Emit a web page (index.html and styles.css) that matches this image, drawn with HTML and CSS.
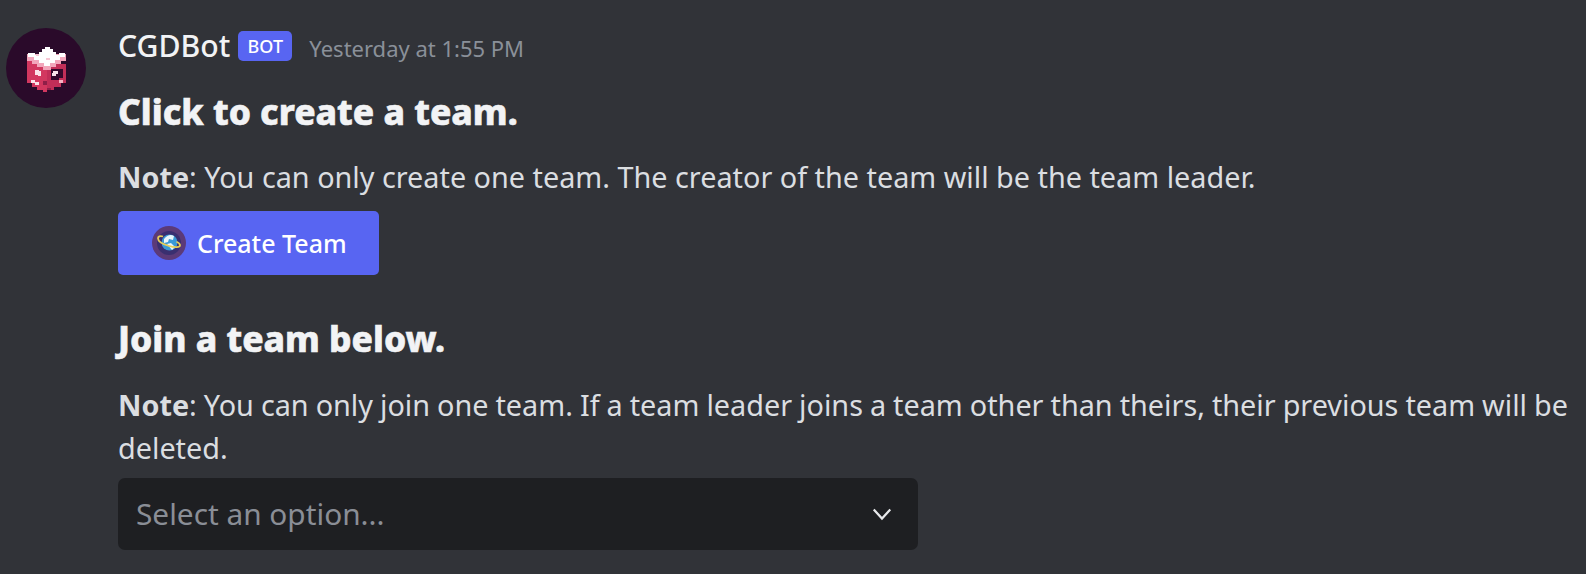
FILE: index.html
```html
<!DOCTYPE html>
<html lang="en">
<head>
<meta charset="utf-8">
<title>CGDBot</title>
<link rel="stylesheet" href="styles.css">
</head>
<body>
<div class="message">
  <svg class="avatar" viewBox="0 0 80 80" shape-rendering="crispEdges" aria-hidden="true">
    <circle cx="40" cy="40" r="40" fill="#2a0a2a" shape-rendering="auto"/>
    <path fill="#d2375f" d="M21 30H41V64H37V62H31V59H26V55H21Z"/>
    <path fill="#c22e58" d="M41 36H60V55H55V59H48V62H41Z"/>
    <path fill="#35092c" d="M45 41H57V50H53V52H45Z"/>
    <path fill="#f2a6bb" d="M21 26H60V33H55V36H50V39H45V42H37V39H31V36H26V33H21Z"/>
    <path fill="#fff" d="M22 25H29V27H33V24H36V21H39V19H44V21H47V24H50V27H53V25H59V29H54V32H49V35H44V38H38V35H33V32H28V29H22Z"/>
    <path fill="#f7c6d3" d="M40 30H44V32H40ZM30 26H33V28H30Z"/>
    <path fill="#fbe3e9" d="M29 42H33V43H35V48H32V47H29ZM47 43H52V46H50V48H46V45H47ZM25 52H29V54H33V57H29V55H25Z"/>
    <path fill="#f4b3c4" d="M53 52H57V55H53Z"/>
    <path fill="#8e1f48" d="M37 53H41V57H37ZM41 60H45V62H41Z"/>
  </svg>
  <div class="content">
    <div class="header">
      <span class="name">CGDBot</span>
      <span class="badge">BOT</span>
      <span class="time">Yesterday at 1:55 PM</span>
    </div>
    <h2 class="title first">Click to create a team.</h2>
    <p class="note"><strong>Note</strong>: You can only create one team. The creator of the team will be the team leader.</p>
    <div class="button">
      <svg class="emoji" viewBox="0 0 34 34" aria-hidden="true">
        <circle cx="17" cy="17" r="17" fill="#5b3a78"/>
        <circle cx="17" cy="17" r="12" fill="#3a2f70"/>
        <circle cx="17.5" cy="16.5" r="8" fill="#3a9ad6"/>
        <path d="M12 13q5-6 10-3l-1 4-4-1-1 3-4 1zM15 18l5 6 3-3-4-4z" fill="#eaf6fb"/>
        <path d="M11 10.500c-3-1-5 0-5 1.800 0 3 5 6 11 7.700 6 1.700 11 1.700 11-.8 0-1.400-1.500-2.500-3.500-3.400" fill="none" stroke="#e8cf58" stroke-width="1.800"/>
      </svg>
      <span>Create Team</span>
    </div>
    <h2 class="title">Join a team below.</h2>
    <p class="note note-join"><strong>Note</strong>: You can only join one team. If a team leader joins a team other than theirs, their previous team will be deleted.</p>
    <div class="select">
      <span>Select an option...</span>
      <svg class="chev" viewBox="0 0 24 24" aria-hidden="true"><path d="M3 7l9 10 9-10" fill="none" stroke="#e8e9ec" stroke-width="2.4"/></svg>
    </div>
  </div>
</div>
</body>
</html>
```
FILE: styles.css
```css
* { box-sizing: border-box; }
html, body { height: 100%; }
body {
  margin: 0;
  background: #313338;
  color: #dbdee1;
  font-family: "Noto Sans", "Liberation Sans", sans-serif;
  overflow: hidden;
}
.message { display: flex; gap: 32px; padding: 28px 0 0 6px; }
.avatar { width: 80px; height: 80px; flex: none; }
.content { flex: none; width: 1468px; }
.header { display: flex; align-items: center; height: 36px; }
.name { font-size: 30.2px; line-height: 36px; font-weight: 500; color: #f2f3f5; }
.badge {
  margin-left: 8px;
  width: 54px; height: 30px;
  background: #5865f2; color: #fff;
  border-radius: 5px;
  font-size: 18px; font-weight: 500;
  display: flex; align-items: center; justify-content: center;
}
.time { margin-left: 17px; margin-top: 3px; font-size: 22px; color: #8a9099; }
.title {
  margin: 0;
  font-size: 35.3px; line-height: 44px; font-weight: 800;
  color: #f2f3f5;
  -webkit-text-stroke: 0.6px #f2f3f5;
}
.first { margin-top: 25px; }
.note { margin: 22px 0 0; font-size: 28.8px; line-height: 43.5px; color: #dbdee1; }
.note-join { margin-top: 23px; word-spacing: -0.5px; }
.note strong { font-weight: 700; }
.button {
  margin-top: 12px;
  width: 261px; height: 64px;
  background: #5865f2; color: #fff; border-radius: 5px;
  font-size: 25px; font-weight: 500;
  display: flex; align-items: center; gap: 11px; padding-left: 34px;
}
.emoji { width: 34px; height: 34px; }
.button + .title { margin-top: 41px; }
.select {
  margin-top: 8px;
  width: 800px; height: 72px;
  background: #1e1f22; border-radius: 7px;
  display: flex; align-items: center; justify-content: space-between;
  padding: 0 25px 0 18px;
  font-size: 29.8px; color: #8a8e96;
}
.chev { width: 22px; height: 22px; }
```
